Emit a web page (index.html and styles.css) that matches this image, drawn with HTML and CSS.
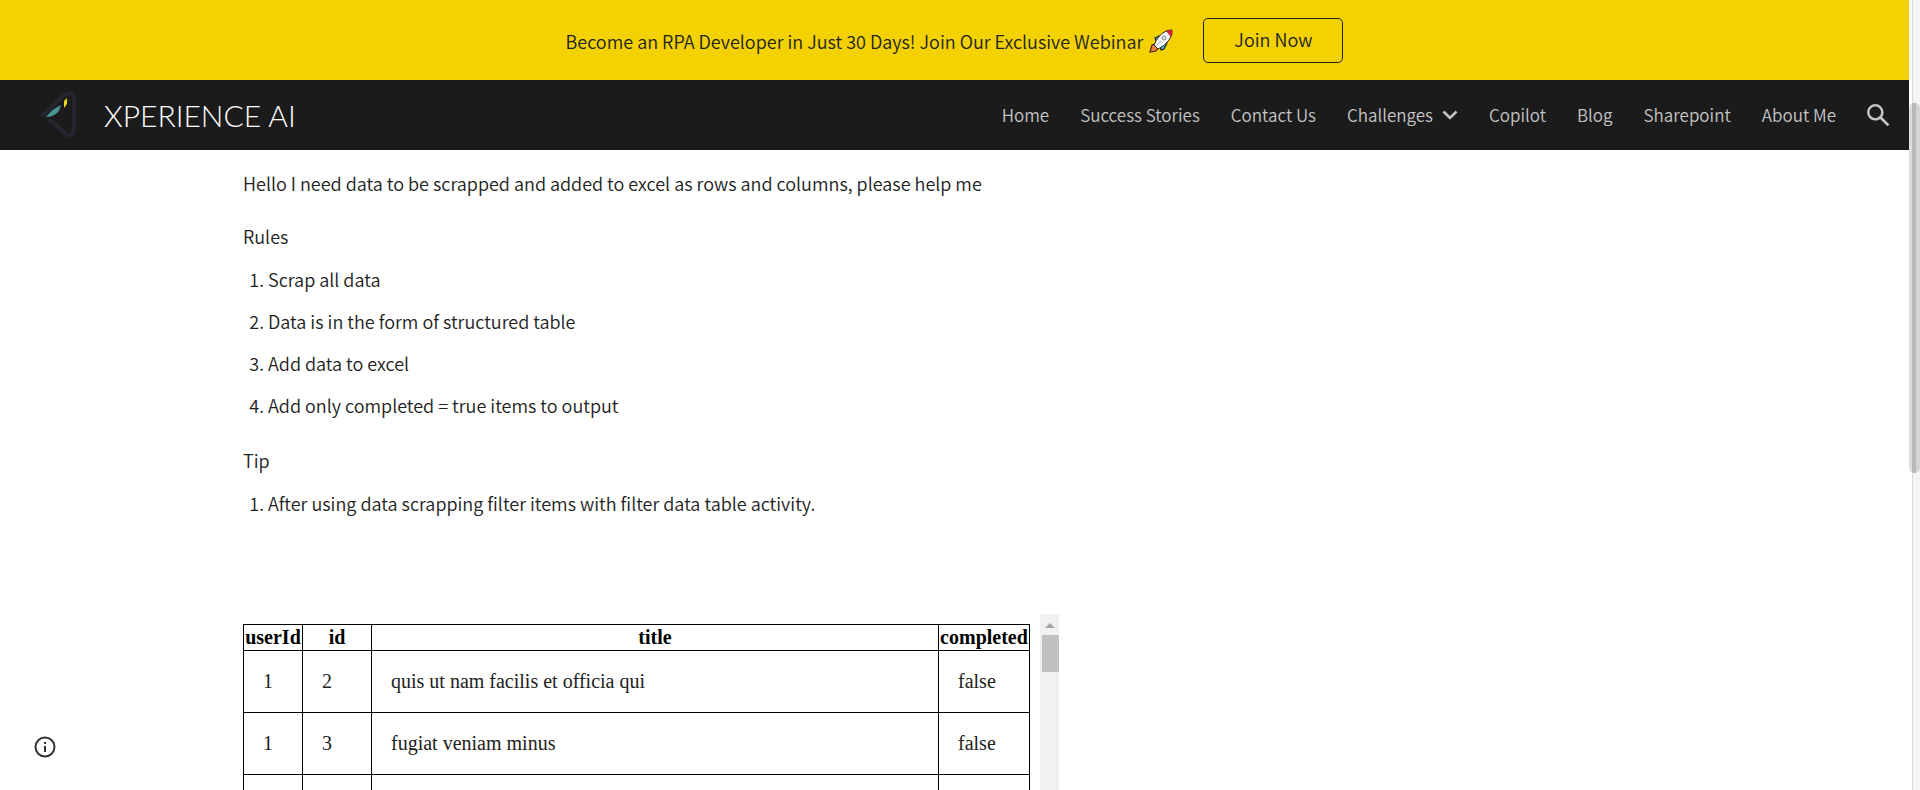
FILE: index.html
```html
<!DOCTYPE html>
<html lang="en">
<head>
<meta charset="utf-8">
<title>XPERIENCE AI</title>
<link rel="stylesheet" href="styles.css">
</head>
<body>
<div class="window">
  <div class="page">
    <div class="banner">
      <p class="banner-text">Become an RPA Developer in Just 30 Days! Join Our Exclusive Webinar
        <svg class="rocket" viewBox="0 0 24 24" aria-hidden="true">
          <path d="M6 9 10 7 13 9 8 14Z" fill="#4cc4ea" stroke="#222" stroke-width="1.2"/>
          <path d="M11 17 16 11 18 14 15 20 12 21Z" fill="#4cc4ea" stroke="#222" stroke-width="1.2"/>
          <path d="M1 23 3 16 8 14 10 18 7 22Z" fill="#e8803c" stroke="#4a2513" stroke-width="1.2"/>
          <path d="M5 16Q9 6 17 2Q20 1 23 1Q24 6 20 11Q16 17 9 20Z" fill="#f6f7f9" stroke="#222" stroke-width="1"/>
          <path d="M17 2Q20 1 23 1Q24 4 22 8Z" fill="#d91f38"/>
          <circle cx="15" cy="9" r="2" fill="#d9dce0" stroke="#8b8f96"/>
          <path d="M7 17 12 12" stroke="#a4aab2"/>
        </svg>
      </p>
      <button class="join" type="button">Join Now</button>
    </div>
    <header class="header">
      <a class="brand" href="#">
        <svg class="logo" viewBox="0 0 48 52" aria-hidden="true">
          <path d="M2 27 24 6Q32 2 34 7V39Q33 49 26 45L9 30" fill="none" stroke="#24272f" stroke-width="4"/>
          <path d="M6 28Q12 20 21 16L19 22Q14 28 6 28Z" fill="#4b9294"/>
          <path d="M24 12 27 9V15L24 19Z" fill="#ead31c"/>
        </svg>
        <span>XPERIENCE AI</span>
      </a>
      <nav class="nav">
        <a href="#">Home</a>
        <a href="#">Success Stories</a>
        <a href="#">Contact Us</a>
        <a class="has-menu" href="#">Challenges
          <svg class="chevron" viewBox="0 0 16 10" aria-hidden="true"><path d="M1.500 1.500 8 8 14.500 1.500" fill="none" stroke="currentColor" stroke-width="2.500"/></svg>
        </a>
        <a href="#">Copilot</a>
        <a href="#">Blog</a>
        <a href="#">Sharepoint</a>
        <a href="#">About Me</a>
        <button class="search" type="button" aria-label="Search">
          <svg viewBox="3 3 18 18" aria-hidden="true"><path fill="currentColor" d="M20.490 19l-5.730-5.730C15.530 12.200 16 10.910 16 9.500A6.500 6.500 0 1 0 9.500 16c1.410 0 2.700-.470 3.770-1.240L19 20.490 20.490 19zM5 9.500C5 7.010 7.010 5 9.500 5S14 7.010 14 9.500 11.990 14 9.500 14 5 11.990 5 9.500z"/></svg>
        </button>
      </nav>
    </header>
    <main class="content">
      <p>Hello I need data to be scrapped and added to excel as rows and columns, please help me</p>
      <p>Rules</p>
      <ol>
        <li>Scrap all data</li>
        <li>Data is in the form of structured table</li>
        <li>Add data to excel</li>
        <li>Add only completed = true items to output</li>
      </ol>
      <p>Tip</p>
      <ol>
        <li>After using data scrapping filter items with filter data table activity.</li>
      </ol>
      <div class="embed">
        <table>
          <colgroup><col class="col-user"><col class="col-id"><col><col class="col-done"></colgroup>
          <thead>
            <tr><th>userId</th><th>id</th><th>title</th><th>completed</th></tr>
          </thead>
          <tbody>
            <tr><td>1</td><td>2</td><td>quis ut nam facilis et officia qui</td><td>false</td></tr>
            <tr><td>1</td><td>3</td><td>fugiat veniam minus</td><td>false</td></tr>
            <tr><td>&nbsp;</td><td></td><td></td><td></td></tr>
          </tbody>
        </table>
        <div class="embed-bar">
          <svg class="arrow" viewBox="0 0 10 5" aria-hidden="true"><path d="M0 5 5 0 10 5Z" fill="#a3a3a3"/></svg>
          <div class="embed-thumb"></div>
        </div>
      </div>
    </main>
    <button class="info" type="button" aria-label="Site information">
      <svg viewBox="0 0 22 22" aria-hidden="true"><circle cx="11" cy="11" r="9.500" fill="none" stroke="#333" stroke-width="2"/><path d="M10 10h2v6h-2zM10 6h2v2h-2z" fill="#333"/></svg>
    </button>
  </div>
  <div class="page-bar"><div class="page-thumb"></div></div>
</div>
</body>
</html>
```
FILE: styles.css
```css
* { box-sizing: border-box; }
body {
  margin: 0;
  background: #fff;
  color: #212121;
  font-family: "Noto Sans CJK SC", "Noto Sans", sans-serif;
  font-size: 18px;
  font-weight: 350;
  line-height: 28px;
}
p, ol { margin: 0; }
a { color: inherit; text-decoration: none; }
button { font: inherit; color: inherit; background: none; border: 0; padding: 0; }
svg { display: block; }

.window { display: flex; height: 100vh; overflow: hidden; }
.page { flex: 1; min-width: 0; overflow: hidden; position: relative; }

.banner {
  display: flex;
  justify-content: center;
  align-items: center;
  gap: 30px;
  height: 80px;
  background: #f4d202;
}
.banner-text { display: flex; align-items: center; gap: 6px; padding-top: 2px; }
.rocket { width: 24px; height: 24px; }
.join {
  height: 45px;
  padding: 0 30px 3px;
  border: 1px solid #212121;
  border-radius: 5px;
  line-height: 40px;
}

.header {
  display: flex;
  justify-content: space-between;
  align-items: center;
  height: 70px;
  padding: 0 19px 0 40px;
  background: #1b1b1b;
  color: #c4c4c4;
}
.brand {
  display: flex;
  align-items: center;
  gap: 16px;
  color: #fff;
  font-family: Lato, sans-serif;
  font-size: 30px;
  font-weight: 300;
}
.logo { width: 48px; height: 52px; }
.nav { display: flex; align-items: center; gap: 31px; font-size: 17px; font-weight: 350; }
.has-menu { display: flex; align-items: center; gap: 9px; }
.chevron { width: 16px; height: 10px; }
.search svg { width: 23px; height: 23px; }

.content { padding: 19px 0 0 243px; }
.content p { margin-bottom: 25px; }
.content p:not(:first-child) { margin-bottom: 15px; }
.content ol { padding-left: 25px; margin-bottom: 27px; }
.content li { margin-bottom: 14px; }
.content li:last-child { margin-bottom: 0; }

.embed {
  display: flex;
  align-items: flex-start;
  justify-content: space-between;
  width: 816px;
  margin-top: 97px;
  font-family: "Liberation Serif", serif;
  font-size: 20px;
  font-weight: 400;
  line-height: 23px;
}
table { width: 787px; margin-top: 10px; border-collapse: collapse; table-layout: fixed; color: #000; }
th, td { border: 1px solid #000; }
th { padding: 1px; }
td { padding: 19px; text-align: left; color: #212121; }
.col-user { width: 59px; }
.col-id { width: 69px; }
.col-done { width: 91px; }
.embed-bar {
  display: flex;
  flex-direction: column;
  gap: 7px;
  width: 19px;
  align-self: stretch;
  padding-top: 9px;
  background: #f1f1f1;
}
.arrow { width: 10px; height: 5px; align-self: center; }
.embed-thumb { height: 37px; margin-left: 2px; background: #c1c1c1; }

.info { position: absolute; left: 34px; bottom: 32px; }
.info svg { width: 22px; height: 22px; }

.page-bar { width: 11px; padding-top: 103px; background: linear-gradient(90deg, #fff 3px, #d8d8d8 3px 4px, #f5f5f5 4px); }
.page-thumb { height: 370px; border-radius: 5px; background: linear-gradient(90deg, #dedede 3px, #b9b9b9 3px 7px, #d4d4d4 7px); }
```
